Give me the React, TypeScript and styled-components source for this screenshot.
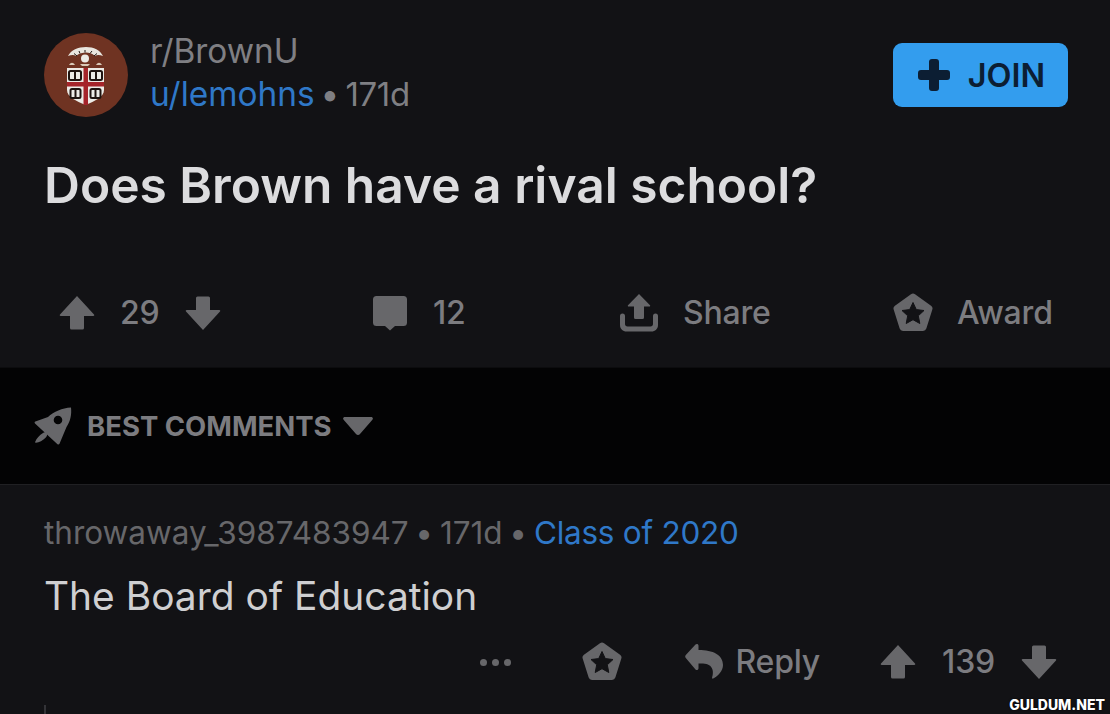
import styled, { createGlobalStyle } from 'styled-components';

const GlobalStyle = createGlobalStyle`
	html, body {
		margin: 0;
		padding: 0;
		background: #121215;
	}
	body {
		font-family: 'Inter', 'Liberation Sans', sans-serif;
	}
`;

function UpArrow() {
	return (
		<svg width="36" height="36" viewBox="0 0 36 36" fill="#67676a">
			<path d="M18 1 35 19.500c.6.7.2 1.500-.7 1.500H25v12a1.500 1.500 0 0 1-1.500 1.500h-11A1.500 1.500 0 0 1 11 33V21H1.700c-.9 0-1.300-.8-.7-1.500z" />
		</svg>
	);
}

function DownArrow() {
	return (
		<svg width="36" height="36" viewBox="0 0 36 36" fill="#67676a">
			<path d="M18 35 1 16.500c-.6-.7-.2-1.500.7-1.500H11V3a1.500 1.500 0 0 1 1.500-1.500h11A1.500 1.500 0 0 1 25 3v12h9.300c.9 0 1.300.8.7 1.500z" />
		</svg>
	);
}

function CommentIcon() {
	return (
		<svg width="36" height="36" viewBox="0 0 36 36" fill="#67676a">
			<path d="M4.500 1h27A3.500 3.500 0 0 1 35 4.500v23a3.500 3.500 0 0 1-3.500 3.500H23l-5 4.500-5-4.500H4.500A3.500 3.500 0 0 1 1 27.500v-23A3.500 3.500 0 0 1 4.500 1z" />
		</svg>
	);
}

function ShareIcon() {
	return (
		<svg width="40" height="40" viewBox="0 0 40 40" fill="#67676a">
			<path d="M20 1 31 12.200c.5.6.2 1.300-.6 1.300H25v11a1.500 1.500 0 0 1-1.500 1.500h-7a1.500 1.500 0 0 1-1.500-1.500v-11H9.600c-.8 0-1.100-.7-.6-1.300z" />
			<path d="M1 23a2.500 2.500 0 0 1 5 0v8c0 1.500 1 2.500 2.500 2.500h23c1.500 0 2.500-1 2.500-2.500v-8a2.500 2.500 0 0 1 5 0v9c0 4-3 6.500-6.500 6.500h-25C4 38.500 1 36 1 32z" />
		</svg>
	);
}

function AwardIcon() {
	return (
		<svg width="40" height="40" viewBox="0 0 40 40">
			<polygon
				points="20,4 36,15.500 30,34.500 10,34.500 4,15.500"
				fill="#67676a"
				stroke="#67676a"
				strokeWidth="7"
				strokeLinejoin="round"
			/>
			<polygon
				points="20,9.500 23.300,16.600 31,17.500 25.300,22.800 26.800,30.500 20,26.700 13.200,30.500 14.700,22.800 9,17.500 16.700,16.600"
				fill="#121215"
				stroke="#121215"
				strokeWidth="1"
				strokeLinejoin="round"
			/>
		</svg>
	);
}

function RocketIcon() {
	return (
		<svg width="38" height="38" viewBox="0 0 38 38" fill="#67676a">
			<path
				fillRule="evenodd"
				d="M37 .5c.8 7-.6 14-4.500 19.500L25.500 36.800c-.4.9-1.300 1.100-2 .4L1 16.500c-.7-.7-.5-1.600.4-1.900L14 10C20 4.500 28 1 37 .5zM24 8.700a4.300 4.300 0 1 0 0 8.600 4.300 4.300 0 0 0 0-8.600z"
			/>
			<path d="M9 26c1.500-1.200 3.200-.7 3.800.5.700 1.300.2 2.800-1 4C9 33.500 5 35.500 2 35.800c-.7 0-1-.4-.8-1C2.500 31.500 5.500 28 9 26z" />
		</svg>
	);
}

function ReplyIcon() {
	return (
		<svg width="38" height="38" viewBox="0 0 38 38" fill="#67676a">
			<path d="M.8 12 10.500 1.500c1.200-1.200 3-.5 3 1.200V7C28 7 38 12 38 22c0 6-5 11-9.800 13.500-.8.400-1.400-.1-1.100-.9C29 29 28.500 21 18 20.500h-4.500v4.800c0 1.700-1.800 2.400-3 1.200L.8 15c-.8-.9-.8-2.100 0-3z" />
		</svg>
	);
}

function Book({ x, y, w, h }: { x: number; y: number; w: number; h: number }) {
	return (
		<g>
			<rect x={x} y={y} width={w} height={h} rx="1.500" fill="#ecebe6" stroke="#1f1410" strokeWidth="2" />
			<rect x={x + w / 2 - 1} y={y} width="2" height={h} fill="#1f1410" />
		</g>
	);
}

function Crest() {
	return (
		<svg width="84" height="84" viewBox="0 0 84 84">
			<circle cx="42" cy="42" r="42" fill="#6f3322" />
			<path d="M24 23c3-6 10-9 18-9s14 3 17 9c-3-1-6-1.500-8 0-3-3-6-3.500-9-3.500s-7 .5-10 3.500c-2-1.500-5-1-8 0z" fill="#e9e6df" />
			<path d="M33 23l-3-2.500M36 20.500l-1-2.500M41 19.500v-2.500M46 20.500l2-2.500M50 23l3-2.500" stroke="#1f1410" strokeWidth="1" />
			<circle cx="41" cy="25.500" r="4" fill="#ecebe6" />
			<path d="M25 32c2-3 4-3 6 0l-3 0zM52 32c2-3 4-3 6 0l-3 0zM36 31h10l-2 2h-6z" fill="#d9c9b8" />
			<path d="M23 35h37v22c0 7-9 11-18.500 15C32 68 23 64 23 57z" fill="#ecebe6" />
			<rect x="39.500" y="35" width="4.500" height="37" fill="#a5242a" />
			<rect x="23" y="49" width="37" height="4.500" fill="#a5242a" />
			<Book x={25} y={38} w={12} h={9} />
			<Book x={46} y={38} w={12} h={9} />
			<Book x={26.500} y={56} w={10} h={9} />
			<Book x={46.500} y={56} w={10} h={9} />
		</svg>
	);
}

function App() {
	return (
		<Page>
			<GlobalStyle />
			<Post>
				<PostHeader>
					<Crest />
					<PostMeta>
						<MetaLine>r/BrownU</MetaLine>
						<MetaLine>
							<Link>u/lemohns</Link>
							<Dot>•</Dot>
							<Age>171d</Age>
						</MetaLine>
					</PostMeta>
					<JoinButton>
						<svg width="32" height="32" viewBox="0 0 32 32" fill="#0c1e33">
							<path d="M11 3a3 3 0 0 1 3-3h4a3 3 0 0 1 3 3v8h8a3 3 0 0 1 3 3v4a3 3 0 0 1-3 3h-8v8a3 3 0 0 1-3 3h-4a3 3 0 0 1-3-3v-8H3a3 3 0 0 1-3-3v-4a3 3 0 0 1 3-3h8z" />
						</svg>
						JOIN
					</JoinButton>
				</PostHeader>
				<Title>Does Brown have a rival school?</Title>
				<PostActions>
					<VoteGroup>
						<UpArrow />
						<ActionText>29</ActionText>
						<DownArrow />
					</VoteGroup>
					<ActionItem>
						<CommentIcon />
						<CountText>12</CountText>
					</ActionItem>
					<ActionItem>
						<ShareIcon />
						<ActionText>Share</ActionText>
					</ActionItem>
					<ActionItem>
						<AwardIcon />
						<ActionText>Award</ActionText>
					</ActionItem>
				</PostActions>
			</Post>
			<SortBand>
				<RocketIcon />
				<SortLabel>BEST COMMENTS</SortLabel>
				<svg width="30" height="18" viewBox="0 0 30 18" fill="#67676a">
					<path d="M2 0h26c1.700 0 2.500 1.500 1.400 2.800L17 17c-1 1.300-3 1.300-4 0L.6 2.800C-.5 1.500.3 0 2 0z" />
				</svg>
			</SortBand>
			<Comment>
				<CommentMeta>
					throwaway_3987483947
					<CommentDot>•</CommentDot>
					171d
					<CommentDot>•</CommentDot>
					<FlairLink>Class of 2020</FlairLink>
				</CommentMeta>
				<CommentBody>The Board of Education</CommentBody>
				<CommentActions>
					<MoreDots>
						<i />
						<i />
						<i />
					</MoreDots>
					<AwardIcon />
					<ReplyGroup>
						<ReplyIcon />
						<ActionText>Reply</ActionText>
					</ReplyGroup>
					<CommentVotes>
						<UpArrow />
						<ActionText>139</ActionText>
						<DownArrow />
					</CommentVotes>
				</CommentActions>
				<ThreadLine />
			</Comment>
			<Watermark>GULDUM.NET</Watermark>
		</Page>
	);
}

const Page = styled.div`
	position: relative;
	width: 1110px;
	height: 714px;
	overflow: hidden;
	background: #121215;
`;

const Post = styled.section`
	height: 367px;
	box-sizing: border-box;
	padding: 33px 42px 0 44px;
	display: flex;
	flex-direction: column;
`;

const PostHeader = styled.header`
	display: flex;
	align-items: flex-start;
`;

const PostMeta = styled.div`
	display: flex;
	flex-direction: column;
	gap: 7px;
	margin-left: 22px;
	flex: 1;
`;

const MetaLine = styled.div`
	font-size: 33.400px;
	line-height: 36px;
	color: #7f7f83;
`;

const Age = styled.span`
	font-size: 33px;
	letter-spacing: -0.3px;
`;

const Link = styled.span`
	color: #2f78c8;
`;

const FlairLink = styled(Link)`
	letter-spacing: -0.25px;
`;

const Dot = styled.span`
	margin: 0 6px;
`;

const CommentDot = styled.span`
	margin: 0 7px 0 6.500px;
`;

const JoinButton = styled.button`
	display: flex;
	align-items: center;
	justify-content: center;
	gap: 18px;
	width: 175px;
	height: 64px;
	margin-top: 10px;
	padding: 0 0 0 2px;
	border: 0;
	border-radius: 9px;
	background: #339dee;
	color: #0c1e33;
	font-family: inherit;
	font-size: 32.500px;
	font-weight: 600;
`;

const Title = styled.h1`
	margin: 38px 0 0;
	font-size: 49.700px;
	line-height: 60px;
	font-weight: 600;
	white-space: nowrap;
	color: #dcdcde;
`;

const PostActions = styled.div`
	display: grid;
	grid-template-columns: 313px 247px 274px auto;
	margin: 78px 0 0 15px;
	align-items: center;
`;

const ActionItem = styled.div`
	display: flex;
	align-items: center;
	gap: 24px;
`;

const VoteGroup = styled(ActionItem)`
	gap: 25px;

	svg:last-child {
		margin-left: 1px;
	}
`;

const ActionText = styled.span`
	font-size: 32px;
	font-weight: 500;
	line-height: 40px;
	letter-spacing: -0.2px;
	color: #7c7c80;
`;

const CountText = styled(ActionText)`
	margin-left: 1px;
`;

const SortBand = styled.div`
	display: flex;
	align-items: center;
	height: 118px;
	box-sizing: border-box;
	padding-left: 34px;
	background: #030304;
	border-top: 1px solid #0c0c0e;
	border-bottom: 1px solid #202023;
`;

const SortLabel = styled.span`
	margin: 0 11px 0 15px;
	font-size: 27.500px;
	font-weight: 700;
	color: #7c7c80;
`;

const Comment = styled.section`
	position: relative;
	height: 229px;
	box-sizing: border-box;
	padding: 26px 53px 0 44px;
`;

const CommentMeta = styled.div`
	font-size: 31.500px;
	line-height: 44px;
	color: #67676a;
`;

const CommentBody = styled.p`
	margin: 18px 0 0;
	font-size: 38.900px;
	line-height: 46px;
	color: #cfcfd1;
`;

const CommentActions = styled.div`
	display: flex;
	align-items: center;
	justify-content: flex-end;
	margin-top: 23px;
`;

const MoreDots = styled.div`
	display: flex;
	gap: 5px;
	margin-right: 71px;

	i {
		width: 7px;
		height: 7px;
		border-radius: 50%;
		background: #67676a;
	}
`;

const ReplyGroup = styled.div`
	display: flex;
	align-items: center;
	gap: 13px;
	margin: 0 60px 0 63px;
`;

const CommentVotes = styled(ActionItem)`
	gap: 26px;
`;

const ThreadLine = styled.div`
	position: absolute;
	left: 44px;
	bottom: 0;
	width: 2px;
	height: 9px;
	background: #333337;
`;

const Watermark = styled.div`
	position: absolute;
	right: 5px;
	bottom: 1px;
	font-size: 14px;
	line-height: 16px;
	font-weight: 800;
	color: #ffffff;
	text-shadow: 0 0 2px #000000;
`;

export default App;
